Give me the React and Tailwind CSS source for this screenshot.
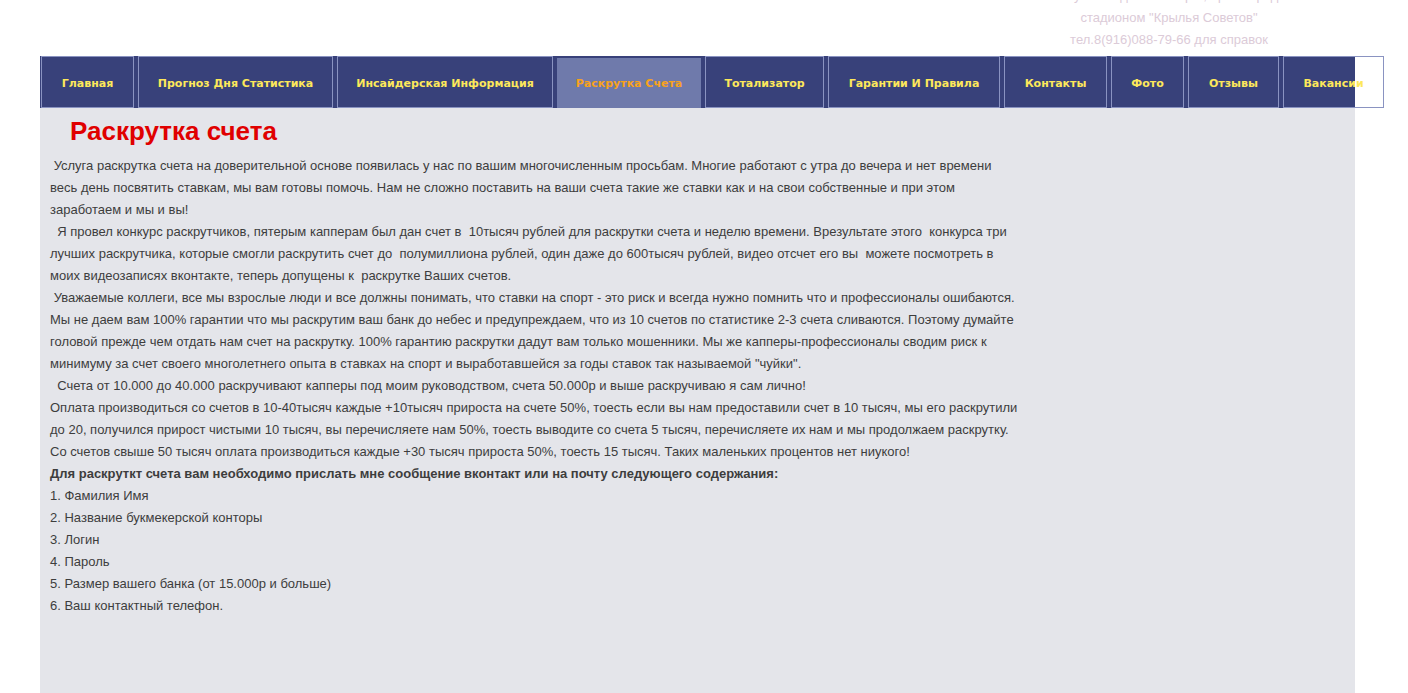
const NAV = [
  { label: 'Главная', w: 'w-[93px]' },
  { label: 'Прогноз Дня Статистика', w: 'w-[195px]' },
  { label: 'Инсайдерская Информация', w: 'w-[216px]' },
  { label: 'Раскрутка Счета', w: 'w-[144px]', active: true },
  { label: 'Тотализатор', w: 'w-[119px]' },
  { label: 'Гарантии И Правила', w: 'w-[172px]' },
  { label: 'Контакты', w: 'w-[103px]' },
  { label: 'Фото', w: 'w-[73px]' },
  { label: 'Отзывы', w: 'w-[91px]' },
  { label: 'Вакансии', w: 'w-[101px]' },
];

const LIST = [
  '1. Фамилия Имя',
  '2. Название букмекерской конторы',
  '3. Логин',
  '4. Пароль',
  '5. Размер вашего банка (от 15.000р и больше)',
  '6. Ваш контактный телефон.',
];

function NavItem({ item }) {
  if (item.active) {
    return (
      <div className={`${item.w} mt-[2px] pt-[3px] shrink-0 bg-[#6f7aab] flex items-center justify-center text-[#f7a21b]`}>
        {item.label}
      </div>
    );
  }
  return (
    <div className={`${item.w} pt-[5px] shrink-0 border border-[#8a93c1] flex items-center justify-center text-[#fde85a] whitespace-nowrap`}>
      {item.label}
    </div>
  );
}

export default function App() {
  return (
    <div className="min-h-[693px] bg-white font-['Liberation_Sans',Arial,sans-serif]">
      {/* Header */}
      <div className="h-[56px] overflow-hidden flex justify-end items-end">
        <div className="w-[300px] mr-[89px] pb-[5px] text-center text-[13px] leading-[22px] text-[#dccbd8]">
          Москва ул.Заводская 15стр.1,офис12 рядом со
          <br />
          стадионом "Крылья Советов"
          <br />
          тел.8(916)088-79-66 для справок
        </div>
      </div>

      <div className="ml-[40px] w-[1315px] min-h-[637px] bg-[#e4e5ea]">
        {/* Nav */}
        <nav className="h-[52px] bg-[#38417a] flex gap-[4px] pl-[1px] font-['DejaVu_Sans',Verdana,sans-serif] font-bold text-[11px]">
          {NAV.map((item) => (
            <NavItem key={item.label} item={item} />
          ))}
        </nav>

        <h1 className="mt-[8px] pl-[30px] text-[26px] leading-[30px] font-bold text-[#e00000]">
          Раскрутка счета
        </h1>

        <div className="mt-[9px] pl-[10px] text-[13px] leading-[22px] text-[#3d3d3d] whitespace-nowrap">
          <p>
            {'\u00a0'}Услуга раскрутка счета на доверительной основе появилась у нас по вашим многочисленным просьбам. Многие работают с утра до вечера и нет времени
            <br />
            весь день посвятить ставкам, мы вам готовы помочь. Нам не сложно поставить на ваши счета такие же ставки как и на свои собственные и при этом
            <br />
            заработаем и мы и вы!
            <br />
            {'\u00a0\u00a0'}Я провел конкурс раскрутчиков, пятерым капперам был дан счет в {'\u00a0'}10тысяч рублей для раскрутки счета и неделю времени. Врезультате этого {'\u00a0'}конкурса три
            <br />
            лучших раскрутчика, которые смогли раскрутить счет до {'\u00a0'}полумиллиона рублей, один даже до 600тысяч рублей, видео отсчет его вы {'\u00a0'}можете посмотреть в
            <br />
            моих видеозаписях вконтакте, теперь допущены к {'\u00a0'}раскрутке Ваших счетов.
            <br />
            {'\u00a0'}Уважаемые коллеги, все мы взрослые люди и все должны понимать, что ставки на спорт - это риск и всегда нужно помнить что и профессионалы ошибаются.
            <br />
            Мы не даем вам 100% гарантии что мы раскрутим ваш банк до небес и предупреждаем, что из 10 счетов по статистике 2-3 счета сливаются. Поэтому думайте
            <br />
            головой прежде чем отдать нам счет на раскрутку. 100% гарантию раскрутки дадут вам только мошенники. Мы же капперы-профессионалы сводим риск к
            <br />
            минимуму за счет своего многолетнего опыта в ставках на спорт и выработавшейся за годы ставок так называемой "чуйки".
            <br />
            {'\u00a0\u00a0'}Счета от 10.000 до 40.000 раскручивают капперы под моим руководством, счета 50.000р и выше раскручиваю я сам лично!
            <br />
            Оплата производиться со счетов в 10-40тысяч каждые +10тысяч прироста на счете 50%, тоесть если вы нам предоставили счет в 10 тысяч, мы его раскрутили
            <br />
            до 20, получился прирост чистыми 10 тысяч, вы перечисляете нам 50%, тоесть выводите со счета 5 тысяч, перечисляете их нам и мы продолжаем раскрутку.
            <br />
            Со счетов свыше 50 тысяч оплата производиться каждые +30 тысяч прироста 50%, тоесть 15 тысяч. Таких маленьких процентов нет ниукого!
          </p>
          <p className="font-bold">
            Для раскруткт счета вам необходимо прислать мне сообщение вконтакт или на почту следующего содержания:
          </p>
          {LIST.map((line) => (
            <p key={line}>{line}</p>
          ))}
        </div>
      </div>
    </div>
  );
}
